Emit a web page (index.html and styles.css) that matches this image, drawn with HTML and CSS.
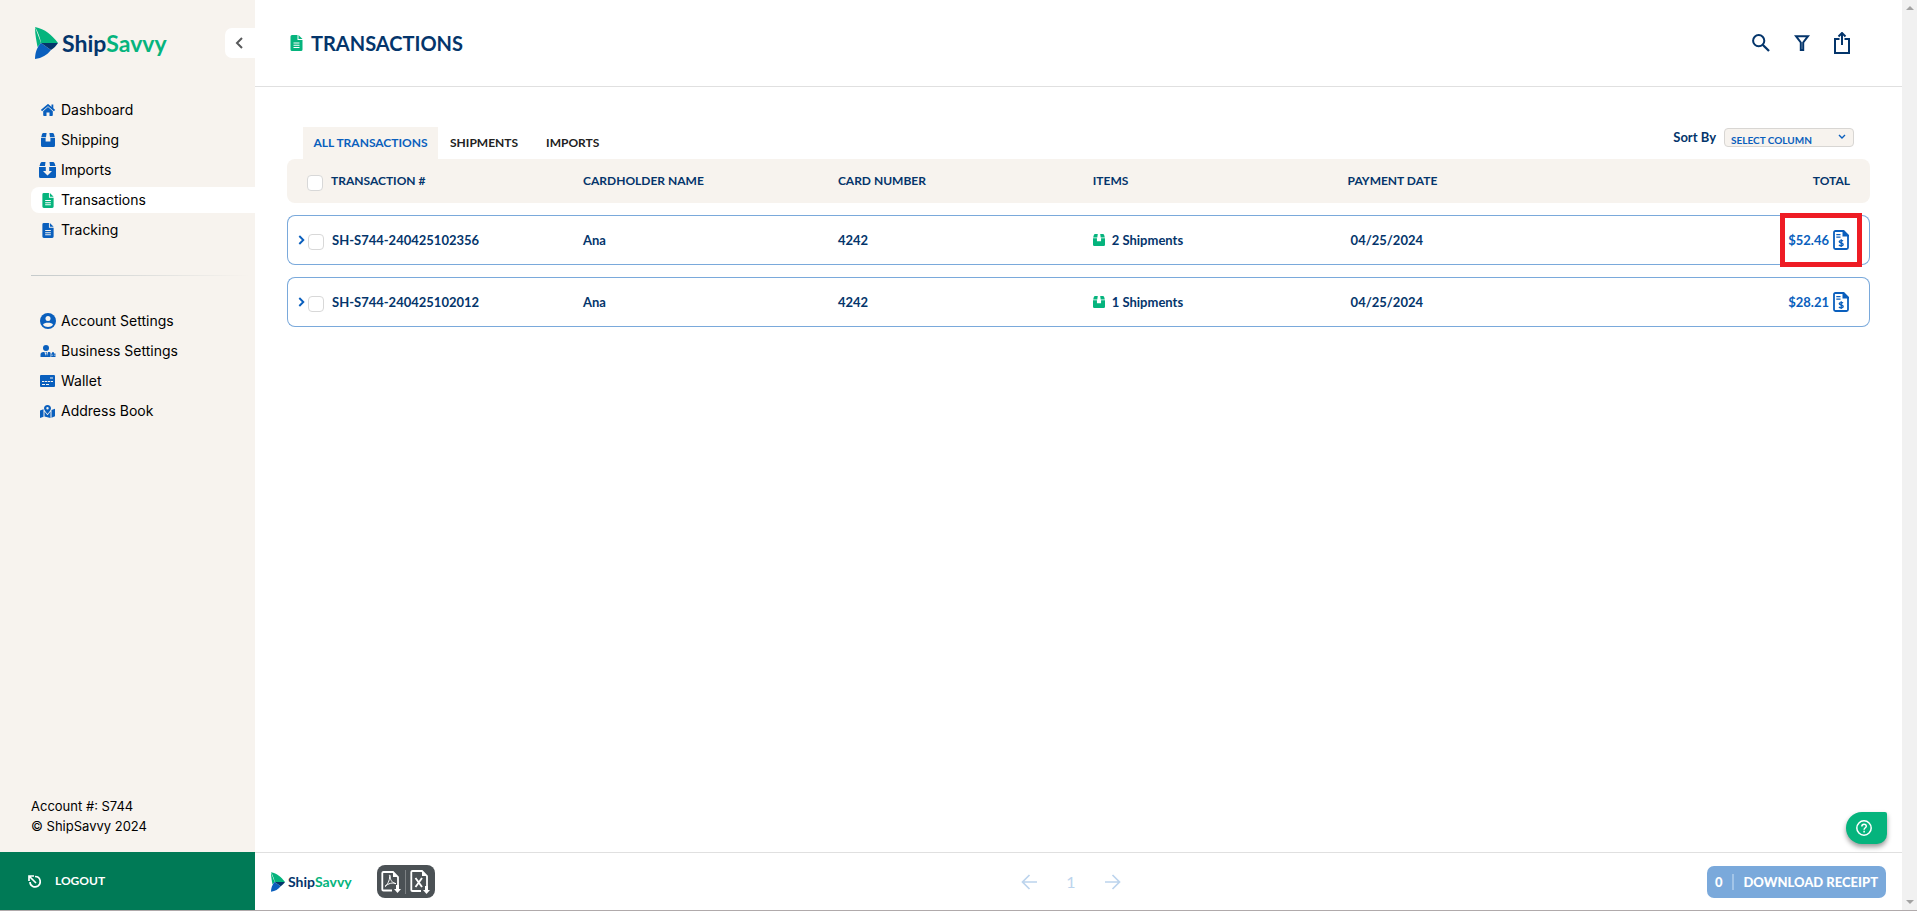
FILE: index.html
```html
<!DOCTYPE html>
<html lang="en">
<head>
<meta charset="utf-8">
<title>ShipSavvy - Transactions</title>
<link rel="stylesheet" href="styles.css">
</head>
<body>
<svg class="defs" aria-hidden="true">
  <symbol id="mark" viewBox="0 0 23 32">
    <path d="M0 0C10 2 17 8 23 16H6C5 10 3 5 0 0Z" fill="#05b47d"/>
    <path d="M0 0L6 16L2.500 20C1.500 14 0 8 0 0Z" fill="#05b47d"/>
    <path d="M0 32C0 26 2 20 6 16L16 23C12 28 7 31 0 32Z" fill="#0a5fbd"/>
    <path d="M6 16H23C21 19 19 21 16 23Z" fill="#04356b"/>
  </symbol>
  <symbol id="box" viewBox="0 0 14 14">
    <path d="M2.4 0H5.6L5 4.2H0.2L1 1.2Q1.4 0 2.4 0ZM8.4 0H11.6Q12.6 0 13 1.2L13.8 4.2H9Z"/>
    <path d="M0 5H4.6V8.6H9.4V5H14V12.5Q14 14 12.5 14H1.500Q0 14 0 12.500Z"/>
  </symbol>
  <symbol id="file" viewBox="0 0 12 16">
    <path fill-rule="evenodd" d="M1.500 0H7V5H12V14.500Q12 16 10.500 16H1.500Q0 16 0 14.500V1.500Q0 0 1.500 0ZM3 7.500V8.500H9V7.500ZM3 9.800V10.800H9V9.800ZM3 12.100V13.100H9V12.100Z"/>
    <path d="M8 0L12 4H8Z"/>
  </symbol>
  <symbol id="chevron" viewBox="0 0 7 10"><path d="M1.300 1L5.300 5L1.300 9" fill="none" stroke="currentColor" stroke-width="1.900"/></symbol>
  <symbol id="receipt" viewBox="0 0 16 20">
    <path d="M10 1H2.500Q1 1 1 2.500V17.500Q1 19 2.500 19H13.500Q15 19 15 17.500V6" fill="none" stroke="currentColor" stroke-width="1.800"/>
    <path d="M9.500 0H11L16 5V6.500H9.500ZM3.300 4H7.500V5.200H3.300ZM3.300 6.600H7.500V7.800H3.300Z"/>
    <path d="M10 11.200C9.200 10.200 6.200 10.200 6.200 11.800C6.200 13.400 10.200 12.600 10.200 14.500C10.200 16.200 6.600 16.100 6 14.900M8.200 9.200V17" fill="none" stroke="currentColor" stroke-width="1.300"/>
  </symbol>
</svg>
<div class="app">
  <aside class="sidebar">
    <div class="brand-row">
      <a class="brand" href="#"><svg class="mark"><use href="#mark"/></svg><span class="ship">Ship</span><span class="savvy">Savvy</span></a>
      <button class="collapse" aria-label="Collapse menu"><svg width="8" height="12" viewBox="0 0 8 12"><path d="M7 1L2 6L7 11" fill="none" stroke="#58595b" stroke-width="2"/></svg></button>
    </div>
    <nav class="nav">
      <a href="#"><span class="ico"><svg width="14" height="12" viewBox="0 0 14 12"><path d="M0.500 6.500L7 1L13.500 6.500" fill="none" stroke="currentColor" stroke-width="1.700"/><path d="M10.500 0.500H12.300V5L10.500 3.500ZM7 3L11.800 7.200V11Q11.800 12 11 12H8.500V8.500H5.500V12H3Q2.200 12 2.200 11V7.200Z"/></svg></span>Dashboard</a>
      <a href="#"><span class="ico"><svg width="14" height="14"><use href="#box"/></svg></span>Shipping</a>
      <a href="#"><span class="ico"><svg width="17" height="16" viewBox="0 0 17 16"><path d="M3 0H6.500L6 4H0.500L1.400 1.200Q2 0 3 0ZM10.500 0H14Q15 0 15.600 1.200L16.500 4H11Z"/><path fill-rule="evenodd" d="M0 5H17V14.500Q17 16 15.500 16H1.500Q0 16 0 14.500ZM6.800 5V9H4L8.500 13.500L13 9H10.200V5Z"/></svg></span>Imports</a>
      <a href="#" class="active" aria-current="page"><span class="ico"><svg width="12" height="15"><use href="#file"/></svg></span>Transactions</a>
      <a href="#"><span class="ico"><svg width="12" height="15"><use href="#file"/></svg></span>Tracking</a>
    </nav>
    <hr class="rule">
    <nav class="nav">
      <a href="#"><span class="ico"><svg width="16" height="16" viewBox="0 0 16 16"><circle cx="8" cy="8" r="8"/><circle cx="8" cy="5.400" r="2.500" fill="#f7f3ee"/><path d="M3 11.800C4 9.200 12 9.200 13 11.800C11 14.700 5 14.700 3 11.800Z" fill="#f7f3ee"/></svg></span>Account Settings</a>
      <a href="#"><span class="ico"><svg width="16" height="12" viewBox="0 0 16 12"><circle cx="6" cy="3" r="3"/><path d="M0.500 12V9.500Q0.500 7 3.500 7H4.500L5.500 11L6 8L5.300 7H7L6.500 8L7 11L8 7H9Q10.300 7.200 10.600 8V12ZM11.200 8.500H12V7.300H14V8.500H15.500V12H11.200Z"/><path d="M11.200 10.200H13M13.800 10.200H15.500" stroke="#f7f3ee" stroke-width=".6"/></svg></span>Business Settings</a>
      <a href="#"><span class="ico"><svg width="15" height="12" viewBox="0 0 15 12"><path d="M1 0H14Q15 0 15 1V11Q15 12 14 12H1Q0 12 0 11V1Q0 0 1 0Z"/><path d="M10 3H13M2 6.500H4.300M5 6.500H7.300M8 6.500H10.300M11 6.500H13M2 9.500H5M6 9.500H9" stroke="#f7f3ee" stroke-width="1"/></svg></span>Wallet</a>
      <a href="#"><span class="ico"><svg width="15" height="13" viewBox="0 0 15 13"><path fill-rule="evenodd" d="M7.500 0C9.600 0 11 1.500 11 3.300C11 5.300 8.800 7.400 7.500 9C6.200 7.400 4 5.300 4 3.300C4 1.500 5.400 0 7.500 0ZM7.500 2.100A1.200 1.200 0 1 0 7.500 4.500A1.200 1.200 0 1 0 7.500 2.100Z"/><path d="M0 5.500L3.500 4.200V11.700L0 13ZM4.500 6.500L7.500 10.300L10.500 6.500V13L4.500 11.500ZM11.500 5L15 3.700V11.300L11.500 12.800Z"/></svg></span>Address Book</a>
    </nav>
    <div class="account"><div>Account #: S744</div><div>© ShipSavvy 2024</div></div>
    <button class="logout"><svg width="13" height="13" viewBox="0 0 13 13"><path d="M7 1.500C13 1.500 13.500 8.500 10 11C7 13 2 11.500 2 7M1.500 1.500L8 8M1 6V1H6" fill="none" stroke="#fff" stroke-width="1.700"/></svg>LOGOUT</button>
  </aside>
  <div class="content">
    <header class="top">
      <h1><svg width="13" height="16"><use href="#file"/></svg>TRANSACTIONS</h1>
      <div class="actions">
        <button aria-label="Search"><svg width="18" height="18" viewBox="0 0 18 18"><circle cx="6.700" cy="6.700" r="5.600" fill="none" stroke="currentColor" stroke-width="2"/><path d="M10.700 10.700L17 17" stroke="currentColor" stroke-width="2.300"/></svg></button>
        <button aria-label="Filter"><svg width="16" height="16" viewBox="0 0 16 16"><path d="M2 1.200H14L9.200 7.500V15H6.800V7.500Z" fill="none" stroke="currentColor" stroke-width="2"/></svg></button>
        <button aria-label="Export"><svg width="16" height="22" viewBox="0 0 16 22"><path d="M5.500 7H1V21H15V7H10.500M8 13V2M4.500 4.500L8 1L11.500 4.500" fill="none" stroke="currentColor" stroke-width="2"/></svg></button>
      </div>
    </header>
    <main class="main">
      <div class="toolbar">
        <div class="tabs">
          <button class="tab selected">ALL TRANSACTIONS</button>
          <button class="tab">SHIPMENTS</button>
          <button class="tab">IMPORTS</button>
        </div>
        <div class="sort">
          <label for="sort">Sort By</label>
          <span class="pick"><select id="sort"><option>SELECT COLUMN</option></select><svg width="8" height="6" viewBox="0 0 8 6"><path d="M1 1L4 4L7 1" fill="none" stroke="#0a5fbd" stroke-width="1.400"/></svg></span>
        </div>
      </div>
      <table class="list">
        <colgroup><col class="c-first"><col class="c-mid"><col class="c-mid"><col class="c-mid"><col></colgroup>
        <thead>
          <tr>
            <th><span class="lead"><input type="checkbox" aria-label="Select all">TRANSACTION #</span></th>
            <th>CARDHOLDER NAME</th><th>CARD NUMBER</th><th>ITEMS</th>
            <th><span class="ends"><span>PAYMENT DATE</span><span>TOTAL</span></span></th>
          </tr>
        </thead>
        <tbody>
          <tr>
            <td><span class="lead"><button class="expand" aria-label="Expand"><svg width="7" height="10"><use href="#chevron"/></svg></button><input type="checkbox" aria-label="Select SH-S744-240425102356">SH-S744-240425102356</span></td>
            <td>Ana</td><td>4242</td>
            <td><span class="items"><svg width="12" height="12"><use href="#box"/></svg>2 Shipments</span></td>
            <td><span class="ends"><span class="date">04/25/2024</span><a class="total" href="#">$52.46<svg width="16" height="20"><use href="#receipt"/></svg></a></span><span class="highlight"></span></td>
          </tr>
          <tr>
            <td><span class="lead"><button class="expand" aria-label="Expand"><svg width="7" height="10"><use href="#chevron"/></svg></button><input type="checkbox" aria-label="Select SH-S744-240425102012">SH-S744-240425102012</span></td>
            <td>Ana</td><td>4242</td>
            <td><span class="items"><svg width="12" height="12"><use href="#box"/></svg>1 Shipments</span></td>
            <td><span class="ends"><span class="date">04/25/2024</span><a class="total" href="#">$28.21<svg width="16" height="20"><use href="#receipt"/></svg></a></span></td>
          </tr>
        </tbody>
      </table>
      <button class="help" aria-label="Help"><svg width="16" height="16" viewBox="0 0 16 16"><circle cx="8" cy="8" r="7.200" fill="none" stroke="#fff" stroke-width="1.500"/><path d="M5.800 6.400C5.800 3.300 10.300 3.500 10.300 6.200C10.300 7.800 8.100 7.800 8.100 9.700M8.100 10.800V12.400" fill="none" stroke="#fff" stroke-width="1.500"/></svg></button>
    </main>
    <footer class="bottom">
      <div class="left">
        <a class="brand small" href="#"><svg class="mark"><use href="#mark"/></svg><span class="ship">Ship</span><span class="savvy">Savvy</span></a>
        <div class="export">
          <button aria-label="Download PDF"><svg width="20" height="22" viewBox="0 0 20 22"><path d="M11 19.500H2.500Q1.300 19.500 1.300 18.500V2Q1.300 1 2.500 1H12L17 6V14" fill="none" stroke="#fff" stroke-width="1.800"/><path d="M12 1V6H17Z" fill="#fff"/><path d="M4 15.500C6 14 9 9.500 8.500 5.500C8 3.500 9.500 3.500 9.200 6C9 9 12 12.500 15 12.700C12 11 7 12.500 4 15.500Z" fill="none" stroke="#fff"/><path d="M15 14H18V18H20L16.500 22L13 18H15Z" fill="#fff"/></svg></button>
          <button aria-label="Download Excel"><svg width="20" height="24" viewBox="0 0 20 24"><path d="M11 21H2.500Q1.300 21 1.300 20V2Q1.300 1 2.500 1H12L17 6V16" fill="none" stroke="#fff" stroke-width="1.800"/><path d="M12 1V6H17Z" fill="#fff"/><path d="M5.500 8L12 17M12 8L5.500 17" stroke="#fff" stroke-width="1.900"/><path d="M15 16H18V20H20L16.500 24L13 20H15Z" fill="#fff"/></svg></button>
        </div>
      </div>
      <div class="pager">
        <button aria-label="Previous page"><svg width="16" height="16" viewBox="0 0 16 16"><path d="M16 8H1.500M8.500 1L1.500 8L8.500 15" fill="none" stroke="currentColor" stroke-width="1.700"/></svg></button>
        <span>1</span>
        <button aria-label="Next page"><svg width="16" height="16" viewBox="0 0 16 16"><path d="M0 8H14.500M7.500 1L14.500 8L7.500 15" fill="none" stroke="currentColor" stroke-width="1.700"/></svg></button>
      </div>
      <button class="download"><span class="count">0</span><span>DOWNLOAD RECEIPT</span></button>
    </footer>
  </div>
  <div class="scrollbar" aria-hidden="true">
    <svg width="8" height="4"><path d="M0 4L4 0L8 4Z" fill="#a3a3a3"/></svg>
    <svg width="8" height="4"><path d="M0 0L4 4L8 0Z" fill="#a3a3a3"/></svg>
  </div>
</div>
</body>
</html>
```
FILE: styles.css
```css
* { box-sizing: border-box; }
body { margin: 0; background: #fff; color: #04356b; font: 700 13px/20px Lato, "Liberation Sans", sans-serif; }
button, select { font: inherit; color: inherit; background: none; border: 0; padding: 0; margin: 0; }
a { color: inherit; text-decoration: none; }
svg { display: block; flex: none; fill: currentColor; }
.defs { position: absolute; width: 0; height: 0; }

.app { display: flex; min-height: 100vh; border-bottom: 1px solid #b0aaab; }

.sidebar { width: 255px; flex: none; display: flex; flex-direction: column; background: #f7f3ee; color: #000; }
.brand-row { display: flex; align-items: center; justify-content: space-between; height: 86px; padding-left: 35px; }
.brand { display: flex; align-items: center; font-size: 23px; line-height: 32px; }
.brand .mark { width: 23px; height: 32px; margin-right: 4px; }
.ship { color: #04356b; }
.savvy { color: #05b47d; }
.collapse { width: 30px; height: 30px; display: flex; align-items: center; padding-left: 10px; background: #fff; border-radius: 7px 0 0 7px; }
.nav { display: flex; flex-direction: column; gap: 4px; padding: 11px 0 0 31px; font: 400 14px/20px Inter, "Liberation Sans", sans-serif; }
.nav a { display: flex; align-items: center; height: 26px; border-radius: 8px 0 0 8px; }
.nav .active { background: #fff; }
.nav .active .ico { color: #05b47d; }
.ico { width: 17px; margin: 0 5px 0 8px; display: flex; justify-content: center; color: #0a5fbd; }
.rule { width: 219px; height: 1px; margin: 32px 0 21px 31px; border: 0; background: linear-gradient(90deg, #c5cacb, #f7f3ee); }
.account { margin-top: auto; padding: 0 31px 16px; font: 400 13px/20px Inter, "Liberation Sans", sans-serif; }
.logout { display: flex; align-items: center; gap: 14px; height: 58px; padding-left: 28px; background: #007a56; color: #fff; font-size: 12px; }

.content { flex: 1; min-width: 0; display: flex; flex-direction: column; }
.top { display: flex; align-items: center; justify-content: space-between; height: 87px; padding: 0 52px 0 35px; border-bottom: 1px solid #e0e0e0; }
h1 { display: flex; align-items: center; gap: 8px; margin: 0; font-size: 20px; font-weight: 700; line-height: 24px; }
h1 svg { color: #05b47d; }
.actions { display: flex; align-items: center; gap: 24px; }

.main { position: relative; flex: 1; padding: 40px 32px 0; }
.toolbar { display: flex; justify-content: space-between; padding: 0 16px; }
.tabs { display: flex; gap: 4px; height: 32px; color: #222; font-size: 12px; }
.tab { padding: 0 8px; }
.tab:last-child { margin-left: 8px; }
.selected { min-width: 135px; background: #f7f3ee; color: #0a5fbd; }
.sort { display: flex; align-items: center; gap: 8px; height: 20px; }
.pick { position: relative; }
.pick select { display: block; width: 130px; height: 19px; padding: 4px 6px 0; border: 1px solid #d8d6d3; border-radius: 4px; background: #f7f3ee; color: #0a5fbd; font-size: 10px; line-height: 14px; appearance: none; }
.pick svg { position: absolute; right: 8px; top: 6px; pointer-events: none; }

.list { position: relative; width: 100%; margin-top: -12px; table-layout: fixed; border-collapse: separate; border-spacing: 0 12px; }
.c-first { width: 18.7%; }
.c-mid { width: 16.1%; }
.list th, .list td { padding: 0; text-align: left; font-weight: 700; }
.list th { height: 44px; background: #f7f3ee; font-size: 12px; }
.list td { position: relative; height: 50px; border: solid #7aa9db; border-width: 1px 0; }
.list th:first-child, .list td:first-child { border-radius: 8px 0 0 8px; }
.list th:last-child, .list td:last-child { border-radius: 0 8px 8px 0; }
.list td:first-child { border-left-width: 1px; }
.list td:last-child { border-right-width: 1px; }
.lead { display: flex; align-items: center; padding-left: 20px; }
.lead input { appearance: none; width: 16px; height: 16px; margin: 4px 8px 0 0; border: 1px solid #d8d8d8; border-radius: 4px; background: #fff; }
td .lead { padding-left: 10px; }
.expand { margin-right: 3px; color: #0a5fbd; }
.items { display: flex; align-items: center; gap: 7px; }
.items svg { color: #05b47d; }
.ends { display: flex; align-items: center; justify-content: space-between; padding-right: 20px; }
.date { padding-left: 3px; }
.total { display: flex; align-items: center; gap: 4px; color: #0a5fbd; }
.highlight { position: absolute; top: -3px; bottom: -3px; right: 7px; width: 82px; border: 5px solid #ee1c24; pointer-events: none; }
.help { position: absolute; right: 15px; bottom: 8px; width: 41px; height: 32px; display: flex; align-items: center; padding-left: 10px; background: #05b47d; border-radius: 16px 2px 10px 16px; box-shadow: 0 3px 5px rgba(0, 0, 0, .4); }

.bottom { display: flex; align-items: center; justify-content: space-between; height: 58px; padding: 0 16px; border-top: 1px solid #e0e0e0; }
.left { display: flex; align-items: center; gap: 25px; }
.small { font-size: 14px; line-height: 20px; }
.small .mark { width: 14px; height: 20px; margin-right: 3px; }
.export { display: flex; align-items: center; width: 58px; height: 33px; border-radius: 8px; background: #4b5155; }
.export button { flex: 1; display: flex; justify-content: center; }
.export button + button { border-left: 1px solid #7d8184; }
.pager { display: flex; align-items: center; justify-content: space-between; width: 100px; color: #bcd4ed; font-size: 16px; font-weight: 400; }
.download { display: flex; align-items: center; height: 32px; padding: 0 8px; border-radius: 7px; background: #7aa9db; color: #fff; font-weight: 900; }
.count { padding-right: 10px; margin-right: 9px; border-right: 2px solid #a3c5e8; line-height: 16px; }

.scrollbar { width: 15px; flex: none; display: flex; flex-direction: column; justify-content: space-between; align-items: center; padding: 6px 0; background: #f1f1f1; }
```
